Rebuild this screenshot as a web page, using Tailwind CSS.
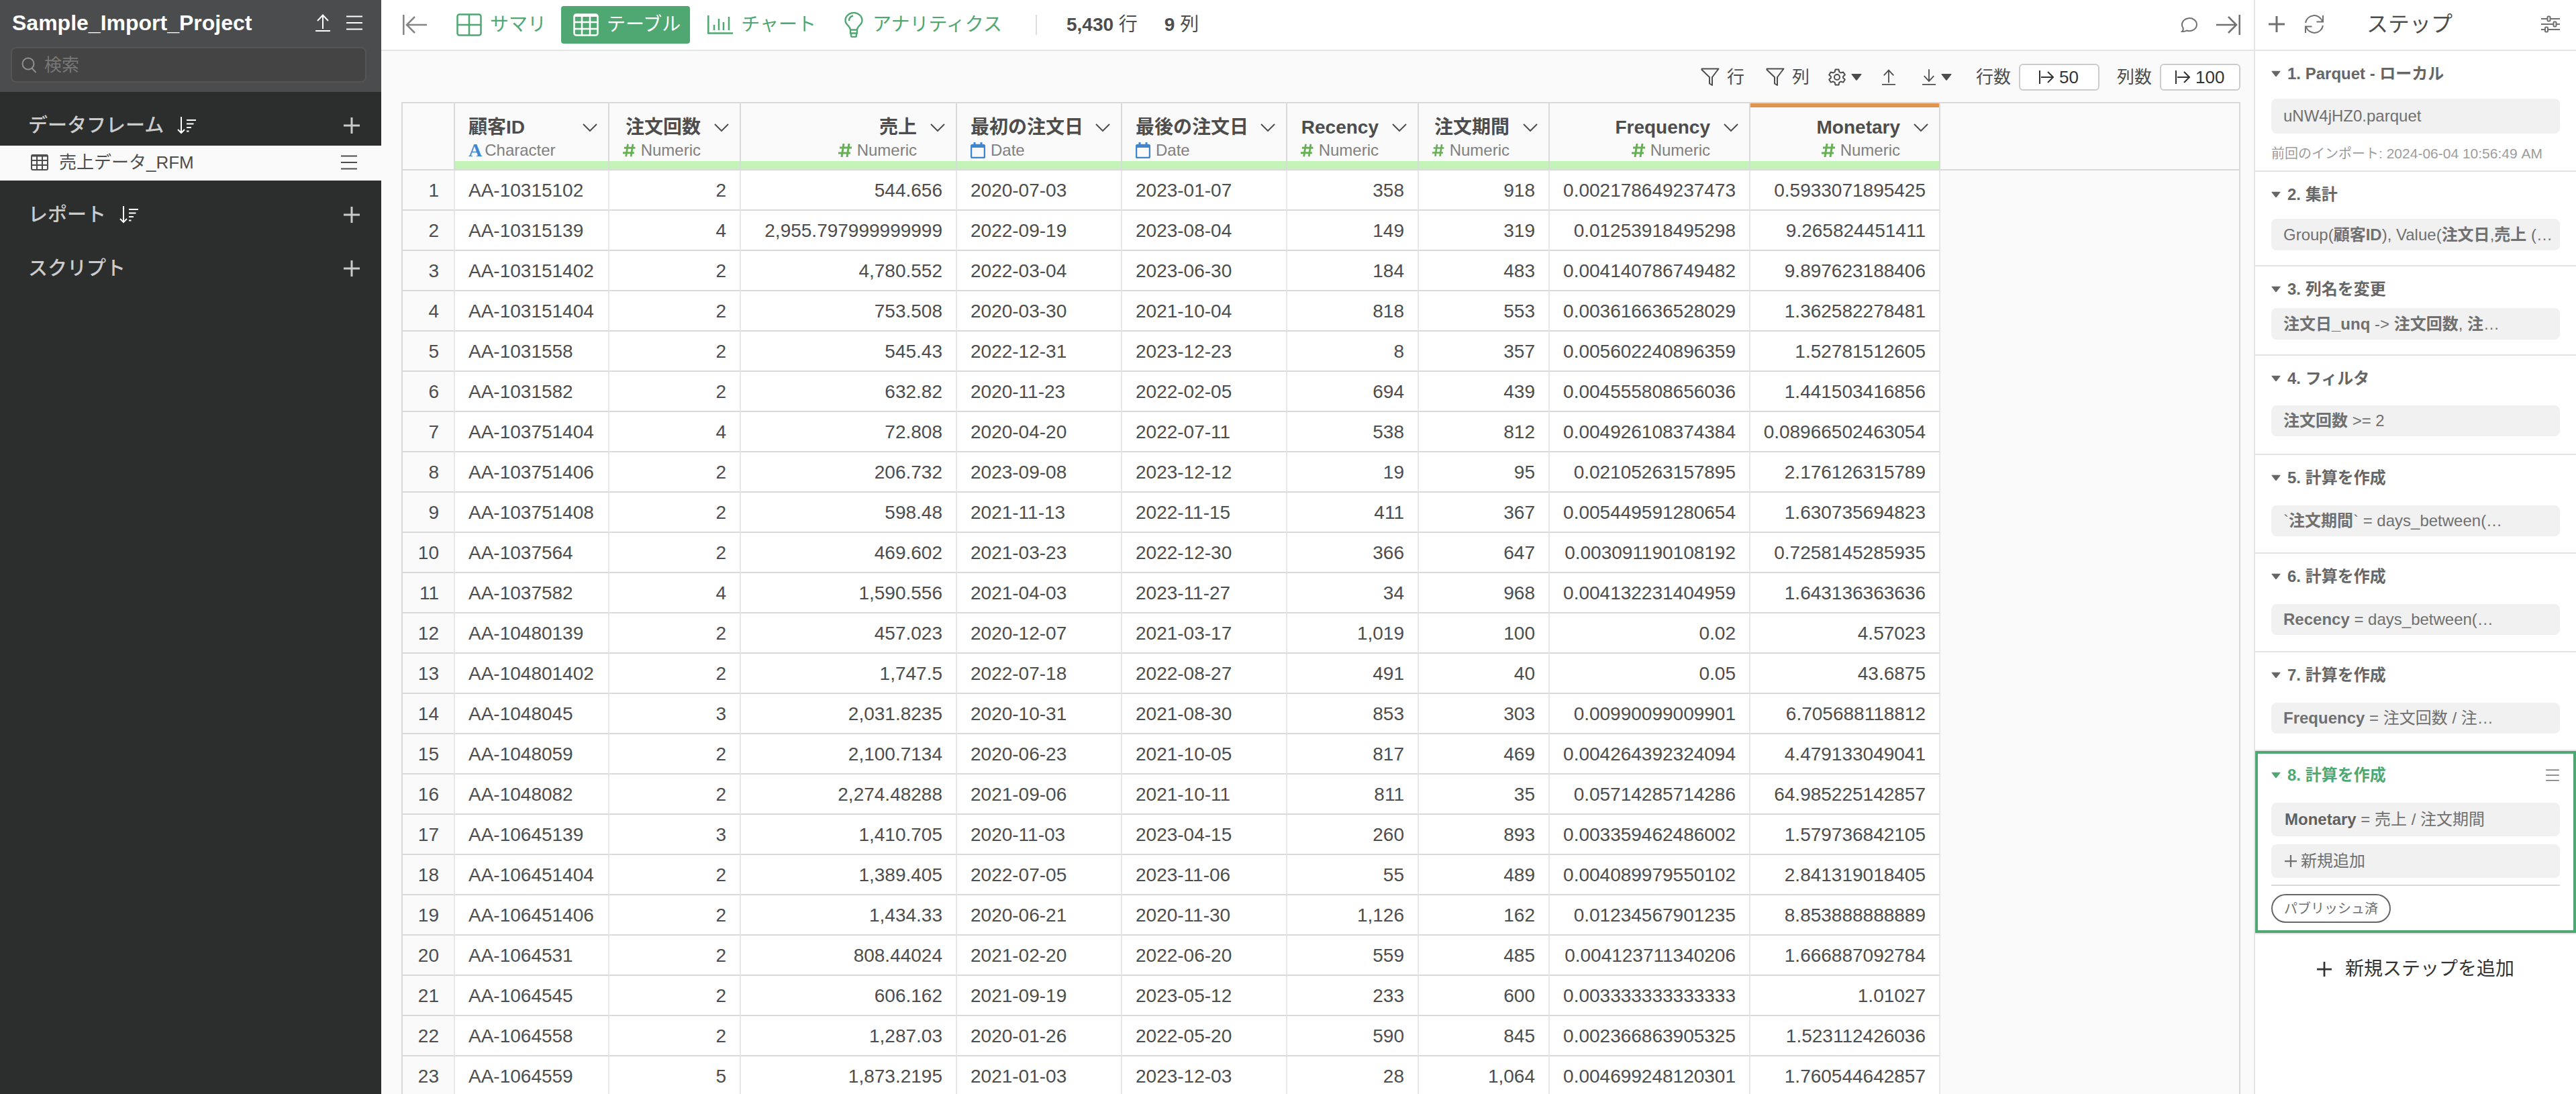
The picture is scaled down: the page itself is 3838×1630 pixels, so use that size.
<!DOCTYPE html>
<html lang="ja">
<head>
  <meta charset="UTF-8" />
  <title>Sample_Import_Project</title>
  <script src="https://cdn.jsdelivr.net/npm/@tailwindcss/browser@4"></script>
</head>
<body class="flex h-screen overflow-hidden bg-[#fafafa] font-['Liberation_Sans','Noto_Sans_CJK_JP',sans-serif] text-[28px] leading-8 text-[#4d4d4d]">

  <!-- icon set -->
  <svg class="hidden">
    <symbol id="i-plus" viewBox="0 0 24 24"><path d="M12 0v24M0 12h24" fill="none" stroke="currentColor" stroke-width="3" /></symbol>
    <symbol id="i-menu" viewBox="0 0 24 22"><path d="M0 1.500h24M0 11h24M0 20.500h24" fill="none" stroke="currentColor" stroke-width="2" /></symbol>
    <symbol id="i-up" viewBox="0 0 22 26"><path d="M11 22V1.500M3 10l8-8.500 8 8.500M0 25h22" fill="none" stroke="currentColor" stroke-width="2" /></symbol>
    <symbol id="i-down" viewBox="0 0 22 26"><path d="M11 0v19M3 11l8 8.500 8-8.500M0 25h22" fill="none" stroke="currentColor" stroke-width="2" /></symbol>
    <symbol id="i-sort" viewBox="0 0 28 26"><path d="M6 0v24M1 19l5 5 5-5M14 5h14M14 10.500h10.500M14 16h7M14 21.500h3.500" fill="none" stroke="currentColor" stroke-width="2" /></symbol>
    <symbol id="i-filter" viewBox="0 0 28 28"><path d="M1.500 1.500h25L17 14v12l-4-2.500V14L1.500 3z" fill="none" stroke="currentColor" stroke-width="2" stroke-linejoin="round" /></symbol>
    <symbol id="i-caret" viewBox="0 0 16 10"><path d="M1 0h14q1 0 .4 1L9 9.300q-1 1-2 0L.6 1Q0 0 1 0z" fill="currentColor" /></symbol>
    <symbol id="i-chevron" viewBox="0 0 22 12"><path d="M1 1l10 10L21 1" fill="none" stroke="currentColor" stroke-width="2" /></symbol>
    <symbol id="i-to" viewBox="0 0 22 20"><path d="M1 0v20M3 10h18M13 2l8 8-8 8" fill="none" stroke="currentColor" stroke-width="2" /></symbol>
    <symbol id="i-hash" viewBox="0 0 20 20"><path d="M8 0L5 20M16 0l-3 20M2 6h18M0 14h18" fill="none" stroke="#67b056" stroke-width="3" /></symbol>
    <symbol id="i-date" viewBox="0 0 22 24"><path d="M6 0v5M16 0v5" fill="none" stroke="#3f86d2" stroke-width="3" /><rect x="1" y="4" width="20" height="19" rx="2" fill="none" stroke="#3f86d2" stroke-width="2.500" /><path d="M1 5h20v3H1z" fill="#3f86d2" /></symbol>
  </svg>

  <!-- project sidebar -->
  <aside class="w-[568px] shrink-0 bg-[#2c2e2d] text-[#cbcbcb]">
    <div class="h-[137px] bg-[#4b4c4e] pt-4">
      <div class="flex h-9 items-center pr-7 pl-[18px] text-white">
        <h1 class="flex-1 text-[32px] font-bold">Sample_Import_Project</h1>
        <button aria-label="公開"><svg class="h-[26px] w-[22px]"><use href="#i-up" /></svg></button>
        <button class="ml-6" aria-label="メニュー"><svg class="h-[22px] w-6"><use href="#i-menu" /></svg></button>
      </div>
      <label class="mt-[18px] mr-[22px] ml-4 flex h-[53px] items-center gap-3 rounded-lg border-2 border-[#555] bg-[#444] px-3.5">
        <svg class="h-6 w-[22px] text-[#8f8f8f]" viewBox="0 0 22 24" fill="none" stroke="currentColor" stroke-width="2"><circle cx="10" cy="10" r="8.500" /><path d="M15.500 16.500L21.500 23" /></svg>
        <input type="text" placeholder="検索" aria-label="検索" class="min-w-0 flex-1 text-[26px] outline-none placeholder:text-[#777]" />
      </label>
    </div>

    <div class="flex h-20 items-center pt-5 pr-8 pl-[42px]">
      <h2 class="text-[29px] font-medium">データフレーム</h2>
      <button class="ml-5 text-white" aria-label="並べ替え"><svg class="h-[26px] w-7"><use href="#i-sort" /></svg></button>
      <button class="ml-auto" aria-label="データフレームを追加"><svg class="size-6"><use href="#i-plus" /></svg></button>
    </div>
    <a href="#" class="flex h-[52px] items-center bg-[#fafafa] pr-9 pb-0.5 pl-[46px] text-[26px] text-[#4d4d4d]">
      <svg class="mr-4 h-6 w-[26px]" viewBox="0 0 26 24" fill="none" stroke="currentColor" stroke-width="2"><rect x="1" y="1" width="24" height="22" rx="2" /><path d="M1 2h24" stroke-width="3" /><path d="M1 9h24M1 16h24M9 1v22M17 1v22" /></svg>
      売上データ_RFM
      <svg class="ml-auto h-[22px] w-6"><use href="#i-menu" /></svg>
    </a>
    <div class="flex h-[100px] items-center pt-0.5 pr-8 pl-[42px]">
      <h2 class="text-[29px] font-medium">レポート</h2>
      <button class="ml-5 text-white" aria-label="並べ替え"><svg class="h-[26px] w-7"><use href="#i-sort" /></svg></button>
      <button class="ml-auto" aria-label="レポートを追加"><svg class="size-6"><use href="#i-plus" /></svg></button>
    </div>
    <div class="flex h-[60px] items-center pt-0.5 pr-8 pl-[42px]">
      <h2 class="text-[29px] font-medium">スクリプト</h2>
      <button class="ml-auto" aria-label="スクリプトを追加"><svg class="size-6"><use href="#i-plus" /></svg></button>
    </div>
  </aside>

  <!-- data view -->
  <main class="flex min-w-0 flex-1 flex-col">
    <header class="flex h-[76px] shrink-0 items-center border-b-2 border-[#e5e5e5] bg-white pr-5 pl-8">
      <button class="text-[#858585]" aria-label="左パネルを閉じる"><svg class="h-[30px] w-9" viewBox="0 0 36 30" fill="none" stroke="currentColor" stroke-width="2.500"><path d="M1.300 0v30M6 15h30M18 3L6 15l12 12" /></svg></button>
      <nav class="ml-[26px] flex items-center gap-2 text-[#4fa872]">
        <a href="#" class="flex h-14 items-center gap-3 rounded pr-3.5 pl-[18px]">
          <svg class="h-[34px] w-[38px]" viewBox="0 0 38 34" fill="none" stroke="currentColor" stroke-width="2.500"><rect x="1.500" y="1.500" width="35" height="31" rx="3" /><path d="M19 1v32M1 17h36" /></svg>
          サマリ
        </a>
        <a href="#" class="flex h-14 items-center gap-3 rounded bg-[#4fa872] pr-3.5 pl-[18px] text-white">
          <svg class="h-[34px] w-[38px]" viewBox="0 0 38 34" fill="none" stroke="currentColor" stroke-width="2.500"><rect x="1.500" y="1.500" width="35" height="31" rx="3" /><path d="M2 3h34" stroke-width="4" /><path d="M1 13h36M1 23h36M13 3v30M25 3v30" /></svg>
          テーブル
        </a>
        <a href="#" class="flex h-14 items-center gap-3 rounded pr-3.5 pl-[18px]">
          <svg class="h-7 w-[38px]" viewBox="0 0 38 28" fill="none" stroke="currentColor" stroke-width="2.500"><path d="M1.300 0v26.500H38M10 14v8M17 5v17M24 10v12M32 2v20" /></svg>
          チャート
        </a>
        <a href="#" class="flex h-14 items-center gap-3 rounded pr-3.5 pl-[18px]">
          <svg class="h-[38px] w-8" viewBox="0 0 32 38" fill="none" stroke="currentColor" stroke-width="2.400"><path d="M11 26.500C11 21 3.500 19 3.500 12.500a12.500 11.500 0 0 1 25 0C28.500 19 21 21 21 26.500zM11 26.500v5h10v-5M12 31.500V35q0 2 2 2h4q2 0 2-2v-3.500M9 13q0-6 6-7.500" /></svg>
          アナリティクス
        </a>
      </nav>
      <div class="ml-9 h-[30px] w-0.5 bg-[#dcdcdc]"></div>
      <p class="ml-11"><b>5,430</b> 行</p>
      <p class="ml-10"><b>9</b> 列</p>
      <div class="ml-auto flex items-center gap-[27px] text-[#707070]">
        <button aria-label="コメント"><svg class="h-6 w-[26px]" viewBox="0 0 26 24" fill="none" stroke="currentColor" stroke-width="2"><path d="M3.500 16.500a11 9.500 0 1 1 5.500 4q-3 2-7 1.500 2.500-2 1.500-5.500z" /></svg></button>
        <button aria-label="右パネルを閉じる"><svg class="h-[30px] w-9" viewBox="0 0 36 30" fill="none" stroke="currentColor" stroke-width="2.500"><path d="M34.700 0v30M0 15h30M18 3l12 12-12 12" /></svg></button>
      </div>
    </header>

    <div class="flex h-[76px] shrink-0 items-center justify-end pt-0.5 pr-5 text-[26px]">
      <button class="flex items-center gap-[11px]"><svg class="size-7"><use href="#i-filter" /></svg>行</button>
      <button class="ml-8 flex items-center gap-[11px]"><svg class="size-7"><use href="#i-filter" /></svg>列</button>
      <button class="ml-7 flex items-center gap-2" aria-label="設定">
        <svg class="size-[26px]" viewBox="0 0 26 26" fill="none" stroke="currentColor" stroke-width="2" stroke-linejoin="round"><path d="M10.500 1.500h5l.8 3.600 2.500 1.400 3.500-1.100 2.500 4.200-2.700 2.400v2l2.700 2.400-2.500 4.200-3.500-1.100-2.500 1.400-.8 3.600h-5l-.8-3.600-2.500-1.400-3.500 1.100-2.500-4.200L3.900 14v-2L1.200 9.600l2.500-4.200 3.500 1.100 2.500-1.400z" /><circle cx="13" cy="13" r="4" /></svg>
        <svg class="h-2.5 w-4"><use href="#i-caret" /></svg>
      </button>
      <button class="ml-[30px]" aria-label="アップロード"><svg class="h-6 w-5"><use href="#i-up" /></svg></button>
      <button class="ml-10 flex items-center gap-2" aria-label="ダウンロード"><svg class="h-6 w-5"><use href="#i-down" /></svg><svg class="h-2.5 w-4"><use href="#i-caret" /></svg></button>
      <label for="rows" class="mr-3 ml-9">行数</label>
      <div class="flex h-10 w-[120px] items-center justify-center gap-2 rounded-md border-2 border-[#ccc] bg-white text-[#333]">
        <svg class="h-5 w-[22px]"><use href="#i-to" /></svg>
        <input id="rows" type="text" value="50" class="w-[30px] outline-none" />
      </div>
      <label for="cols" class="mr-3 ml-[26px]">列数</label>
      <div class="flex h-10 w-[120px] items-center justify-center gap-2 rounded-md border-2 border-[#ccc] bg-white text-[#333]">
        <svg class="h-5 w-[22px]"><use href="#i-to" /></svg>
        <input id="cols" type="text" value="100" class="w-11 outline-none" />
      </div>
    </div>

    <div class="mr-5 ml-[30px] min-h-0 flex-1 overflow-hidden border-2 border-b-0 border-[#dadada]">
      <table class="w-full table-fixed border-separate border-spacing-0">
        <colgroup>
          <col class="w-[78px]" />
          <col class="w-[230px]" />
          <col class="w-[196px]" />
          <col class="w-[322px]" />
          <col class="w-[246px]" />
          <col class="w-[246px]" />
          <col class="w-[196px]" />
          <col class="w-[195px]" />
          <col class="w-[299px]" />
          <col class="w-[283px]" />
          <col />
        </colgroup>
        <thead><tr id="head"></tr></thead>
        <tbody id="body"></tbody>
      </table>
    </div>
  </main>

  <!-- steps -->
  <aside class="w-[480px] shrink-0 border-l-2 border-[#e5e5e5] bg-white text-2xl leading-6 text-[#707070]">
    <header class="flex h-[76px] items-center border-b-2 border-[#e5e5e5] pr-6 pb-0.5 pl-5">
      <button aria-label="ステップを追加"><svg class="size-6"><use href="#i-plus" /></svg></button>
      <button class="ml-[30px]" aria-label="更新"><svg class="size-7" viewBox="0 0 28 28" fill="none" stroke="currentColor" stroke-width="2"><path d="M1 12A13 13 0 0 1 26 9.500M27 1v9.500h-9.500M27 16A13 13 0 0 1 2 18.500M1 27v-9.500h9.500" /></svg></button>
      <h2 class="ml-16 text-[32px] leading-9 text-[#4d4d4d]">ステップ</h2>
      <button class="ml-auto" aria-label="設定"><svg class="h-[26px] w-7" viewBox="0 0 28 26" fill="none" stroke="currentColor" stroke-width="2"><path d="M0 5h9M14 5h14M0 13h18M23 13h5M0 21h6M11 21h17" /><rect x="9.500" y="1.500" width="4" height="7" rx="1" /><rect x="18.500" y="9.500" width="4" height="7" rx="1" /><rect x="6" y="17.500" width="4" height="7" rx="1" /></svg></button>
    </header>

    <section class="border-b-2 border-[#e3e3e3] px-6 pt-[22px] pb-[13px]">
      <h3 class="flex items-center gap-2.5 font-bold text-[#666]"><svg class="h-2.5 w-3.5"><use href="#i-caret" /></svg>1. Parquet - ローカル</h3>
      <p class="mt-[25px] flex h-[52px] items-center rounded-lg bg-[#f1f1f1] px-[18px]">uNW4jHZ0.parquet</p>
      <p class="mt-[18px] text-xl leading-6 whitespace-nowrap text-[#9c9c9c]">前回のインポート<span class="text-[21px]">: 2024-06-04 10:56:49 AM</span></p>
    </section>
    <section class="border-b-2 border-[#e3e3e3] px-6 pt-[22px] pb-[22px]">
      <h3 class="flex items-center gap-2.5 font-bold text-[#666]"><svg class="h-2.5 w-3.5"><use href="#i-caret" /></svg>2. 集計</h3>
      <p class="mt-6 h-[47px] rounded-lg bg-[#f1f1f1] px-[18px] leading-[47px] whitespace-nowrap">Group(<b>顧客ID</b>), Value(<b>注文日</b>,<b>売上</b> (…</p>
    </section>
    <section class="border-b-2 border-[#e3e3e3] px-6 pt-[22px] pb-[22px]">
      <h3 class="flex items-center gap-2.5 font-bold text-[#666]"><svg class="h-2.5 w-3.5"><use href="#i-caret" /></svg>3. 列名を変更</h3>
      <p class="mt-4 h-[47px] rounded-lg bg-[#f1f1f1] px-[18px] leading-[47px] whitespace-nowrap"><b>注文日_unq</b> -&gt; <b>注文回数</b>, <b>注</b>…</p>
    </section>
    <section class="border-b-2 border-[#e3e3e3] px-6 pt-[22px] pb-[26px]">
      <h3 class="flex items-center gap-2.5 font-bold text-[#666]"><svg class="h-2.5 w-3.5"><use href="#i-caret" /></svg>4. フィルタ</h3>
      <p class="mt-7 h-[46px] rounded-lg bg-[#f1f1f1] px-[18px] leading-[46px]"><b>注文回数</b> &gt;= 2</p>
    </section>
    <section class="border-b-2 border-[#e3e3e3] px-6 pt-[22px] pb-6">
      <h3 class="flex items-center gap-2.5 font-bold text-[#666]"><svg class="h-2.5 w-3.5"><use href="#i-caret" /></svg>5. 計算を作成</h3>
      <p class="mt-[29px] h-[46px] rounded-lg bg-[#f1f1f1] px-[18px] leading-[46px]">`<b>注文期間</b>` = days_between(…</p>
    </section>
    <section class="border-b-2 border-[#e3e3e3] px-6 pt-[22px] pb-6">
      <h3 class="flex items-center gap-2.5 font-bold text-[#666]"><svg class="h-2.5 w-3.5"><use href="#i-caret" /></svg>6. 計算を作成</h3>
      <p class="mt-[29px] h-[46px] rounded-lg bg-[#f1f1f1] px-[18px] leading-[46px]"><b>Recency</b> = days_between(…</p>
    </section>
    <section class="border-b-2 border-[#e3e3e3] px-6 pt-[22px] pb-6">
      <h3 class="flex items-center gap-2.5 font-bold text-[#666]"><svg class="h-2.5 w-3.5"><use href="#i-caret" /></svg>7. 計算を作成</h3>
      <p class="mt-[29px] h-[46px] rounded-lg bg-[#f1f1f1] px-[18px] leading-[46px]"><b>Frequency</b> = 注文回数 / 注…</p>
    </section>

    <!-- selected step -->
    <div class="border-b-2 border-[#e3e3e3]">
      <section class="border-4 border-[#4fa872] px-5 pt-5 pb-[11px]">
        <h3 class="flex items-center gap-2.5 font-bold text-[#4fa872]">
          <svg class="h-2.5 w-3.5"><use href="#i-caret" /></svg>8. 計算を作成
          <button class="ml-auto text-[#707070]" aria-label="ステップメニュー"><svg class="h-[18px] w-[22px]"><use href="#i-menu" /></svg></button>
        </h3>
        <p class="mt-[29px] h-[50px] rounded-lg bg-[#f1f1f1] px-5 leading-[50px]"><b class="text-[#606060]">Monetary</b> = 売上 / 注文期間</p>
        <button class="mt-3 flex h-[50px] w-full items-center gap-1.5 rounded-lg bg-[#f1f1f1] px-5"><svg class="size-[18px]"><use href="#i-plus" /></svg>新規追加</button>
        <hr class="mt-2.5 border-t-2 border-[#dadada]" />
        <button class="mt-3 h-[43px] w-[178px] rounded-full border-2 border-[#666] text-xl">パブリッシュ済</button>
      </section>
    </div>
    <button class="mt-9 flex w-full items-center justify-center gap-5 text-[28px] leading-8 text-[#333]"><svg class="size-[22px]"><use href="#i-plus" /></svg>新規ステップを追加</button>
  </aside>

  <script>
    const columns = [
      ['顧客ID', 'Character'],
      ['注文回数', 'Numeric'],
      ['売上', 'Numeric'],
      ['最初の注文日', 'Date'],
      ['最後の注文日', 'Date'],
      ['Recency', 'Numeric'],
      ['注文期間', 'Numeric'],
      ['Frequency', 'Numeric'],
      ['Monetary', 'Numeric'],
    ];

    const rows = `
AA-10315102 2 544.656 2020-07-03 2023-01-07 358 918 0.002178649237473 0.5933071895425
AA-10315139 4 2,955.797999999999 2022-09-19 2023-08-04 149 319 0.01253918495298 9.265824451411
AA-103151402 2 4,780.552 2022-03-04 2023-06-30 184 483 0.004140786749482 9.897623188406
AA-103151404 2 753.508 2020-03-30 2021-10-04 818 553 0.003616636528029 1.362582278481
AA-1031558 2 545.43 2022-12-31 2023-12-23 8 357 0.005602240896359 1.52781512605
AA-1031582 2 632.82 2020-11-23 2022-02-05 694 439 0.004555808656036 1.441503416856
AA-103751404 4 72.808 2020-04-20 2022-07-11 538 812 0.004926108374384 0.08966502463054
AA-103751406 2 206.732 2023-09-08 2023-12-12 19 95 0.02105263157895 2.176126315789
AA-103751408 2 598.48 2021-11-13 2022-11-15 411 367 0.005449591280654 1.630735694823
AA-1037564 2 469.602 2021-03-23 2022-12-30 366 647 0.003091190108192 0.7258145285935
AA-1037582 4 1,590.556 2021-04-03 2023-11-27 34 968 0.004132231404959 1.643136363636
AA-10480139 2 457.023 2020-12-07 2021-03-17 1,019 100 0.02 4.57023
AA-104801402 2 1,747.5 2022-07-18 2022-08-27 491 40 0.05 43.6875
AA-1048045 3 2,031.8235 2020-10-31 2021-08-30 853 303 0.00990099009901 6.705688118812
AA-1048059 2 2,100.7134 2020-06-23 2021-10-05 817 469 0.004264392324094 4.479133049041
AA-1048082 2 2,274.48288 2021-09-06 2021-10-11 811 35 0.05714285714286 64.985225142857
AA-10645139 3 1,410.705 2020-11-03 2023-04-15 260 893 0.003359462486002 1.579736842105
AA-106451404 2 1,389.405 2022-07-05 2023-11-06 55 489 0.004089979550102 2.841319018405
AA-106451406 2 1,434.33 2020-06-21 2020-11-30 1,126 162 0.01234567901235 8.853888888889
AA-1064531 2 808.44024 2021-02-20 2022-06-20 559 485 0.004123711340206 1.666887092784
AA-1064545 2 606.162 2021-09-19 2023-05-12 233 600 0.003333333333333 1.01027
AA-1064558 2 1,287.03 2020-01-26 2022-05-20 590 845 0.002366863905325 1.523112426036
AA-1064559 5 1,873.2195 2021-01-03 2023-12-03 28 1,064 0.004699248120301 1.760544642857
`.trim().split('\n').map(line => line.split(' '));

    const icons = {
      Character: `<span class="mr-1 font-['Liberation_Serif'] text-[28px] font-bold text-[#3f86d2]">A</span>`,
      Numeric: '<svg class="mr-2 size-5"><use href="#i-hash" /></svg>',
      Date: '<svg class="mr-2 h-6 w-[22px]"><use href="#i-date" /></svg>',
    };

    const isNumeric = i => columns[i][1] === 'Numeric';

    document.getElementById('head').innerHTML =
      '<th class="border-r-2 border-b-2 border-[#dadada]"></th>' +
      columns.map(([name, type], i) => `
        <th class="h-[100px] border-r-2 border-b-2 border-[#dadada] p-0 align-top">
          <div class="flex h-[98px] flex-col border-t-[6px] ${name === 'Monetary' ? 'border-[#e0944c]' : 'border-transparent'}">
            <div class="flex items-center pt-3.5 pr-4 pl-5 ${isNumeric(i) ? 'justify-end gap-5' : 'justify-between'}">
              <span class="whitespace-nowrap">${name}</span>
              <button aria-label="列メニュー"><svg class="h-3 w-[22px]"><use href="#i-chevron" /></svg></button>
            </div>
            <div class="flex h-8 items-center pt-1 pl-5 text-2xl font-normal text-[#808080] ${isNumeric(i) ? 'justify-end pr-[58px]' : ''}">${icons[type]}${type}</div>
            <div class="mt-auto h-3 bg-[#c4f3b8]"></div>
          </div>
        </th>`).join('') +
      '<th class="border-b-2 border-[#dadada]"></th>';

    document.getElementById('body').innerHTML = rows.map((row, n) => `
      <tr class="h-[60px]">
        <th class="border-r-2 border-b-2 border-r-[#e8e8e8] border-b-[#dadada] p-0 pt-0.5 pr-[22px] text-right font-normal">${n + 1}</th>
        ${row.map((value, i) => `<td class="border-r-2 border-b-2 border-r-[#e8e8e8] border-b-[#dadada] bg-white p-0 pt-0.5 whitespace-nowrap ${isNumeric(i) ? 'pr-5 text-right' : 'pl-5'}">${value}</td>`).join('')}
        <td></td>
      </tr>`).join('');
  </script>
</body>
</html>
